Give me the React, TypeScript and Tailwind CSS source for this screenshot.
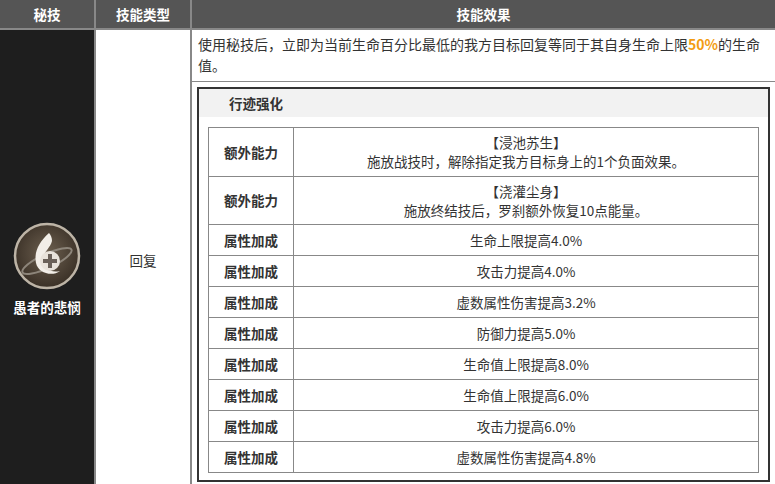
export default function App() {
  const rows: [string, string, string?][] = [
    ["额外能力", "【浸池苏生】", "施放战技时，解除指定我方目标身上的1个负面效果。"],
    ["额外能力", "【浇灌尘身】", "施放终结技后，罗刹额外恢复10点能量。"],
    ["属性加成", "生命上限提高4.0%"],
    ["属性加成", "攻击力提高4.0%"],
    ["属性加成", "虚数属性伤害提高3.2%"],
    ["属性加成", "防御力提高5.0%"],
    ["属性加成", "生命值上限提高8.0%"],
    ["属性加成", "生命值上限提高6.0%"],
    ["属性加成", "攻击力提高6.0%"],
    ["属性加成", "虚数属性伤害提高4.8%"],
  ];
  return (
    <div className="w-[775px] h-[484px] bg-white text-[13.5px] text-[#333] overflow-hidden" style={{ fontFamily: '"Noto Sans CJK SC", "Liberation Sans", sans-serif' }}>
      <div className="flex h-[30px] bg-[#555] text-white font-bold border-b-2 border-[#888]">
        <div className="w-[96px] flex items-center justify-center border-r-2 border-[#888]">秘技</div>
        <div className="w-[96px] flex items-center justify-center border-r-2 border-[#888]">技能类型</div>
        <div className="flex-1 flex items-center justify-center">技能效果</div>
      </div>
      <div className="flex h-[454px]">
        <div className="w-[96px] bg-[#1e1e1e] border-r-2 border-[#888] flex flex-col items-center justify-center pt-[24px]">
          <svg width="70" height="70" viewBox="0 0 70 70">
            <defs>
              <radialGradient id="g" cx="50%" cy="45%" r="55%">
                <stop offset="0%" stopColor="#6d6050" />
                <stop offset="100%" stopColor="#3a3026" />
              </radialGradient>
            </defs>
            <circle cx="35" cy="35" r="32" fill="url(#g)" stroke="#bdb4a6" strokeWidth="2.5" />
            <ellipse cx="35" cy="40" rx="27" ry="7" fill="none" stroke="#8d857a" strokeWidth="2" transform="rotate(-25 35 40)" />
            <path d="M37 12 C26 22 22 32 24 42 C26 52 40 56 48 50 C40 52 30 48 30 40 C30 32 38 28 40 20 C40 17 39 14 37 12Z" fill="#f2eee8" />
            <circle cx="38" cy="40" r="10" fill="#e8e2da" />
            <path d="M36 33h4v5h5v4h-5v5h-4v-5h-5v-4h5z" fill="#6a6058" />
          </svg>
          <div className="text-white font-bold mt-[6px]">愚者的悲悯</div>
        </div>
        <div className="w-[96px] border-r-2 border-[#888] flex items-center justify-center pt-[6px]">回复</div>
        <div className="flex-1 flex flex-col">
          <div className="pl-[6px] pr-[4px] pt-[4px] pb-[5px] leading-[21px] text-[14px] border-b border-[#888]">
            使用秘技后，立即为当前生命百分比最低的我方目标回复等同于其自身生命上限<span className="text-[#f39c12] font-bold">50%</span>的生命值。
          </div>
          <div className="mx-[5px] mt-[5px] h-[395px] border-2 border-[#333]">
            <div className="h-[28px] bg-[#f2f2f2] flex items-center pl-[30px] font-bold">行迹强化</div>
            <div className="mx-[9px] mt-[10px] border border-[#888]">
              {rows.map((r, i) => (
                <div key={i} className={`flex ${r[2] ? "h-[48px]" : "h-[31px]"} ${i ? "border-t border-[#888]" : ""}`}>
                  <div className="w-[85px] border-r border-[#888] flex items-center justify-center font-bold">{r[0]}</div>
                  <div className="flex-1 flex flex-col items-center justify-center leading-[19px]">
                    <div>{r[1]}</div>
                    {r[2] && <div>{r[2]}</div>}
                  </div>
                </div>
              ))}
            </div>
          </div>
        </div>
      </div>
    </div>
  );
}
